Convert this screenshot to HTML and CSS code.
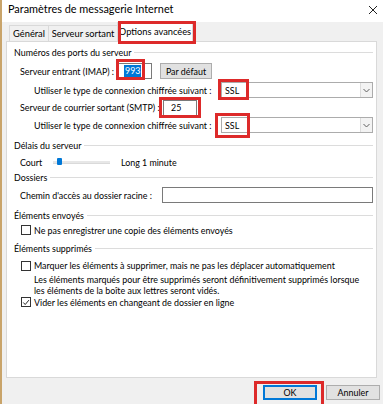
FILE: index.html
```html
<!DOCTYPE html>
<html lang="fr">
<head>
<meta charset="utf-8">
<title>Paramètres de messagerie Internet</title>
<link rel="stylesheet" href="styles.css">
</head>
<body>
<div class="window">
  <div class="titlebar">
    <span class="title">Paramètres de messagerie Internet</span>
    <svg class="close" width="10" height="10" viewBox="0 0 10 10"><path d="M1 1 L9 9 M9 1 L1 9" stroke="#222" stroke-width="1" fill="none"/></svg>
  </div>
  <div class="body">
    <div class="tabs">
      <div class="tab t-gen">Général</div>
      <div class="tab t-srv">Serveur sortant</div>
      <div class="tab t-opt active">Options avancées</div>
    </div>
    <div class="panel">
      <div class="group g1"><span>Numéros des ports du serveur</span></div>
      <div class="row r-imap">
        <span class="lbl l-imap">Serveur entrant (IMAP) :</span>
        <span class="input in-imap"><span class="sel">993</span></span>
        <span class="btn btn-def">Par défaut</span>
      </div>
      <div class="row r-ssl1 ssl">
        <span class="lbl">Utiliser le type de connexion chiffrée suivant :</span>
        <span class="combo"><span class="cval">SSL</span><span class="carrow"><svg width="7" height="5" viewBox="0 0 7 5"><path d="M0.5 1 L3.5 4 L6.5 1" stroke="#606060" fill="none" stroke-width="1"/></svg></span></span>
      </div>
      <div class="row r-smtp">
        <span class="lbl l-smtp">Serveur de courrier sortant (SMTP) :</span>
        <span class="input in-smtp">25</span>
      </div>
      <div class="row r-ssl2 ssl">
        <span class="lbl">Utiliser le type de connexion chiffrée suivant :</span>
        <span class="combo"><span class="cval">SSL</span><span class="carrow"><svg width="7" height="5" viewBox="0 0 7 5"><path d="M0.5 1 L3.5 4 L6.5 1" stroke="#606060" fill="none" stroke-width="1"/></svg></span></span>
      </div>
      <div class="group g2"><span>Délais du serveur</span></div>
      <div class="row r-slider">
        <span class="lbl l-court">Court</span>
        <span class="track"><span class="thumb"></span></span>
        <span class="lbl l-long">Long</span>
        <span class="lbl">1 minute</span>
      </div>
      <div class="group g3"><span>Dossiers</span></div>
      <div class="row r-path">
        <span class="lbl l-path">Chemin d'accès au dossier racine :</span>
        <span class="input in-path"></span>
      </div>
      <div class="group g4"><span>Éléments envoyés</span></div>
      <div class="row cbrow cb1">
        <span class="cb"></span>
        <span class="lbl">Ne pas enregistrer une copie des éléments envoyés</span>
      </div>
      <div class="group g5"><span>Éléments supprimés</span></div>
      <div class="row cbrow cb2">
        <span class="cb"></span>
        <span class="lbl">Marquer les éléments à supprimer, mais ne pas les déplacer automatiquement</span>
      </div>
      <div class="note">Les éléments marqués pour être supprimés seront définitivement supprimés lorsque<br>les éléments de la boîte aux lettres seront vidés.</div>
      <div class="row cbrow cb3">
        <span class="cb checked"><svg width="9" height="9" viewBox="0 0 9 9"><path d="M1.5 4.5 L3.6 6.8 L7.8 1.8" stroke="#222" stroke-width="1.1" fill="none"/></svg></span>
        <span class="lbl">Vider les éléments en changeant de dossier en ligne</span>
      </div>
    </div>
    <div class="footer">
      <span class="btn btn-ok">OK</span>
      <span class="btn btn-cancel">Annuler</span>
    </div>
  </div>
</div>
<div class="mark m-tab"></div>
<div class="mark m-imap"></div>
<div class="mark m-ssl1"></div>
<div class="mark m-smtp"></div>
<div class="mark m-ssl2"></div>
<div class="mark m-ok"></div>
</body>
</html>
```
FILE: styles.css
```css
* { box-sizing: border-box; }
html, body { margin: 0; padding: 0; }
body {
  position: relative;
  width: 383px;
  height: 404px;
  overflow: hidden;
  font-family: Lato, "Noto Sans", sans-serif;
  font-size: 8.9px;
  color: #000;
  background: #f0f0f0;
}
.window {
  width: 383px;
  height: 404px;
  border-left: 2px solid #c9a46a;
  background: #f0f0f0;
  display: flex;
  flex-direction: column;
}
.titlebar {
  height: 22px;
  background: #fff;
  display: flex;
  align-items: center;
  justify-content: space-between;
  padding: 0 5px 6px 6px;
}
.title { font-size: 10.9px; }
.close { display: block; margin-top: 4px; }
.body { padding: 0 6px 0 4px; }
.tabs {
  height: 19px;
  display: flex;
  align-items: flex-end;
  padding-left: 3px;
}
.tab {
  height: 16px;
  border: 1px solid #d9d9d9;
  border-bottom: none;
  background: #f0f0f0;
  display: flex;
  align-items: center;
  justify-content: center;
  margin-right: -1px;
  white-space: nowrap;
  font-size: 9.3px;
}
.t-gen { width: 40px; }
.t-srv { width: 70px; }
.t-opt { width: 76px; }
.tab.active {
  height: 20px;
  background: #fff;
  margin-bottom: -1px;
  position: relative;
  z-index: 1;
  padding-bottom: 2px;
}
.panel {
  width: 371px;
  height: 337px;
  background: #fff;
  border: 1px solid #d9d9d9;
  padding: 1px 3px 0 7px;
}
.group {
  display: flex;
  align-items: center;
  gap: 3px;
  white-space: nowrap;
}
.group::after {
  content: "";
  flex: 1;
  height: 1px;
  background: #dcdcdc;
}
.g1 { height: 18px; }
.g2 { height: 22px; }
.g3 { height: 19px; }
.g4 { height: 18px; margin-top: 3px; }
.g5 { height: 24px; }
.row {
  display: flex;
  align-items: center;
  padding-left: 6px;
  white-space: nowrap;
}
.lbl { flex-shrink: 0; }
.r-imap { height: 20px; }
.r-ssl1 { height: 18px; }
.r-smtp { height: 17px; }
.r-ssl2 { height: 18px; }
.r-slider { height: 12px; }
.r-path { height: 16px; }
.ssl { padding-left: 20px; }
.l-imap { width: 98px; }
.l-smtp { width: 143px; }
.l-path { width: 142px; }
.input {
  flex-shrink: 0;
  height: 16px;
  border: 1px solid #7a7a7a;
  background: #fff;
  display: flex;
  align-items: center;
  padding-left: 5px;
}
.in-imap { width: 34px; }
.in-smtp { width: 34px; padding-left: 7px; }
.in-path { width: 211px; }
.sel {
  background: #0078d7;
  color: #fff;
  padding: 0 1px;
  line-height: 12px;
}
.btn {
  flex-shrink: 0;
  height: 16px;
  border: 1px solid #adadad;
  background: #e1e1e1;
  display: flex;
  align-items: center;
  justify-content: center;
}
.btn-def { width: 52px; margin-left: 8px; }
.combo {
  margin-left: auto;
  width: 152px;
  height: 16px;
  border: 1px solid #acacac;
  background: #fff;
  display: flex;
  align-items: center;
  justify-content: space-between;
  padding-left: 3px;
}
.carrow {
  width: 12px;
  height: 14px;
  background: #f3f3f3;
  border-left: 1px solid #dcdcdc;
  display: flex;
  align-items: center;
  justify-content: center;
}
.l-court { width: 33px; }
.track {
  width: 57px;
  height: 3px;
  background: #e7e7e7;
  border: 1px solid #dadada;
  border-width: 0 0 1px 0;
  position: relative;
  margin-right: 11px;
}
.thumb {
  position: absolute;
  left: 4px;
  top: -3px;
  width: 5px;
  height: 7px;
  background: #0078d7;
  border-radius: 1px;
}
.l-long { width: 21px; }
.cbrow { padding-left: 7px; gap: 3px; }
.cb1 { height: 12px; }
.cb2 { height: 11px; }
.cb3 { height: 14px; }
.cb {
  flex-shrink: 0;
  width: 10px;
  height: 10px;
  border: 1px solid #333;
  background: #fff;
  display: flex;
  align-items: center;
  justify-content: center;
}
.note {
  padding: 3px 0 0 20px;
  line-height: 11px;
  height: 24px;
  white-space: nowrap;
}
.footer {
  height: 26px;
  display: flex;
  justify-content: flex-end;
  align-items: flex-start;
  gap: 9px;
  padding-top: 7px;
  margin-right: -3px;
}
.btn-ok, .btn-cancel { width: 54px; height: 15px; }
.btn-ok { border: 1px solid #0078d7; box-shadow: inset 0 0 0 1px #0078d7; }
.mark {
  position: absolute;
  border: 3px solid #dd2a2a;
  z-index: 5;
}
.m-tab { left: 118px; top: 21px; width: 78px; height: 23px; }
.m-imap { left: 116px; top: 59px; width: 29px; height: 21px; }
.m-ssl1 { left: 218px; top: 79px; width: 31px; height: 21px; }
.m-smtp { left: 159px; top: 97px; width: 42px; height: 21px; }
.m-ssl2 { left: 215px; top: 113px; width: 35px; height: 25px; }
.m-ok { left: 254px; top: 381px; width: 70px; height: 27px; }
```
